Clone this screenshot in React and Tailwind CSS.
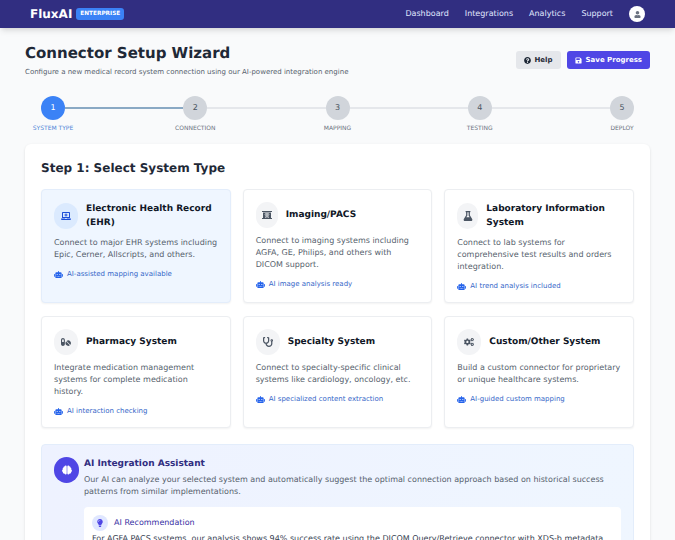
import { FaBrain, FaCogs, FaFlask, FaLaptopMedical, FaLightbulb, FaPills, FaQuestionCircle, FaRobot, FaSave, FaStethoscope, FaUser, FaXRay } from 'react-icons/fa'

const steps = [
  { n: 1, label: 'SYSTEM TYPE' },
  { n: 2, label: 'CONNECTION' },
  { n: 3, label: 'MAPPING' },
  { n: 4, label: 'TESTING' },
  { n: 5, label: 'DEPLOY' },
]

const systems = [
  { title: 'Electronic Health Record (EHR)', text: 'Connect to major EHR systems including Epic, Cerner, Allscripts, and others.', ai: 'AI-assisted mapping available', Icon: FaLaptopMedical, iconW: 'w-[24px]', active: true },
  { title: 'Imaging/PACS', text: 'Connect to imaging systems including AGFA, GE, Philips, and others with DICOM support.', ai: 'AI image analysis ready', Icon: FaXRay, iconW: 'w-[22px]' },
  { title: 'Laboratory Information System', text: 'Connect to lab systems for comprehensive test results and orders integration.', ai: 'AI trend analysis included', Icon: FaFlask, iconW: 'w-[21px]' },
  { title: 'Pharmacy System', text: 'Integrate medication management systems for complete medication history.', ai: 'AI interaction checking', Icon: FaPills, iconW: 'w-[24px]' },
  { title: 'Specialty System', text: 'Connect to specialty-specific clinical systems like cardiology, oncology, etc.', ai: 'AI specialized content extraction', Icon: FaStethoscope, iconW: 'w-[24px]' },
  { title: 'Custom/Other System', text: 'Build a custom connector for proprietary or unique healthcare systems.', ai: 'AI-guided custom mapping', Icon: FaCogs, iconW: 'w-[24px]' },
]

function SystemCard({ title, text, ai, Icon, iconW, active }) {
  return (
    <div className={`rounded-[4px] border p-3 shadow-xs ${active ? 'border-[#e3edfb] bg-[#eff6ff]' : 'border-[#eceef1] bg-white'}`}>
      <div className="mb-[7px] flex items-center gap-2">
        <div className={`flex h-[26px] shrink-0 items-center justify-center rounded-full text-[10px] ${iconW} ${active ? 'bg-[#dbeafe] text-[#1d4ed8]' : 'bg-[#f3f4f6] text-[#4b5563]'}`}>
          <Icon />
        </div>
        <h3 className="text-[9px] font-bold leading-[14px] text-[#111827]">{title}</h3>
      </div>
      <p className="text-[8px] leading-[12px] text-[#565f6d]">{text}</p>
      <div className="mt-2 flex items-center gap-1 text-[7px] leading-[10px] text-[#3566c8]">
        <FaRobot className="text-[9px] text-[#2563eb]" />
        <span>{ai}</span>
      </div>
    </div>
  )
}

export default function App() {
  return (
    <div className="h-[540px] overflow-hidden bg-[#f9fafb] font-['DejaVu_Sans',sans-serif] [text-rendering:geometricPrecision]">
      <header className="flex h-7 items-center justify-between bg-[#312e81] px-[30px] shadow-md">
        <div className="flex items-center gap-1">
          <span className="text-[12px] font-bold text-white">FluxAI</span>
          <span className="rounded-[3px] bg-[#3b82f6] px-1 py-[2px] text-[5.75px] font-bold leading-[8px] text-white">ENTERPRISE</span>
        </div>
        <nav className="flex items-center gap-4 text-[8px] text-[#e0e7ff]">
          <a>Dashboard</a>
          <a>Integrations</a>
          <a>Analytics</a>
          <a>Support</a>
          <div className="flex h-4 w-4 items-center justify-center rounded-full bg-white text-[7px] text-[#6b7280]">
            <FaUser />
          </div>
        </nav>
      </header>

      <main className="px-[25px] pt-[14px]">
        <div className="flex items-center justify-between">
          <div>
            <h1 className="text-[15px] font-bold leading-[22px] text-[#1f2937]">Connector Setup Wizard</h1>
            <p className="mt-[2px] text-[7px] leading-[12px] text-[#565f6d]">Configure a new medical record system connection using our AI-powered integration engine</p>
          </div>
          <div className="flex items-center gap-[6px]">
            <button className="flex h-[18px] items-center gap-1 rounded-[3px] bg-[#e5e7eb] px-2 text-[7px] font-bold text-[#1f2937]">
              <FaQuestionCircle /> Help
            </button>
            <button className="flex h-[18px] items-center gap-1 rounded-[3px] bg-[#4f46e5] px-2 text-[7px] font-bold text-white">
              <FaSave /> Save Progress
            </button>
          </div>
        </div>

        <div className="mt-[18px] flex items-start px-4">
          {steps.map((s, i) => (
            <div key={s.n} className={`flex items-start ${i < 4 ? 'flex-1' : ''}`}>
              <div className="flex w-6 flex-col items-center">
                <div className={`flex h-6 w-6 items-center justify-center rounded-full text-[8px] ${s.n === 1 ? 'bg-[#3b82f6] text-white' : 'bg-[#d1d5db] text-[#4b5563]'}`}>{s.n}</div>
                <span className={`mt-[3px] whitespace-nowrap text-[6px] leading-[12px] ${s.n === 1 ? 'text-[#4f86d8]' : 'text-[#6b7280]'}`}>{s.label}</span>
              </div>
              {i < 4 && <div className={`mt-[11px] h-[2px] flex-1 ${s.n === 1 ? 'bg-[#8aa9c4]' : 'bg-[#e5e7eb]'}`} />}
            </div>
          ))}
        </div>

        <section className="mt-[9px] rounded-[6px] bg-white px-4 pt-4 shadow-sm">
          <h2 className="mb-[13px] text-[12px] font-bold leading-4 text-[#1f2937]">Step 1: Select System Type</h2>
          <div className="grid grid-cols-3 grid-rows-[114px_112px] gap-[13px_12px]">
            {systems.map((s) => <SystemCard key={s.title} {...s} />)}
          </div>
          <div className="mt-4 rounded-[4px] border border-[#e3edfb] bg-gradient-to-r from-[#eef2ff] to-[#eff6ff] p-3">
            <div className="flex gap-[5px]">
              <div className="flex h-[26px] w-[25px] shrink-0 items-center justify-center rounded-full bg-[#4f46e5] text-[10px] text-white">
                <FaBrain />
              </div>
              <div>
                <h3 className="text-[9px] font-bold leading-[14px] text-[#312e81]">AI Integration Assistant</h3>
                <p className="mt-[3px] text-[8px] leading-[12px] text-[#565f6d]">Our AI can analyze your selected system and automatically suggest the optimal connection approach based on historical success patterns from similar implementations.</p>
                <div className="mt-[9px] rounded-[4px] bg-white p-2">
                  <div className="flex items-center gap-[6px]">
                    <div className="flex h-4 w-4 items-center justify-center rounded-full bg-[#e0e7ff] text-[8px] text-[#4f46e5]"><FaLightbulb /></div>
                    <span className="text-[8px] text-[#3730a3]">AI Recommendation</span>
                  </div>
                  <p className="mt-[2px] text-[8px] leading-[12px] text-[#374151]">For AGFA PACS systems, our analysis shows 94% success rate using the DICOM Query/Retrieve connector with XDS-b metadata</p>
                </div>
              </div>
            </div>
          </div>
        </section>
      </main>
    </div>
  )
}
